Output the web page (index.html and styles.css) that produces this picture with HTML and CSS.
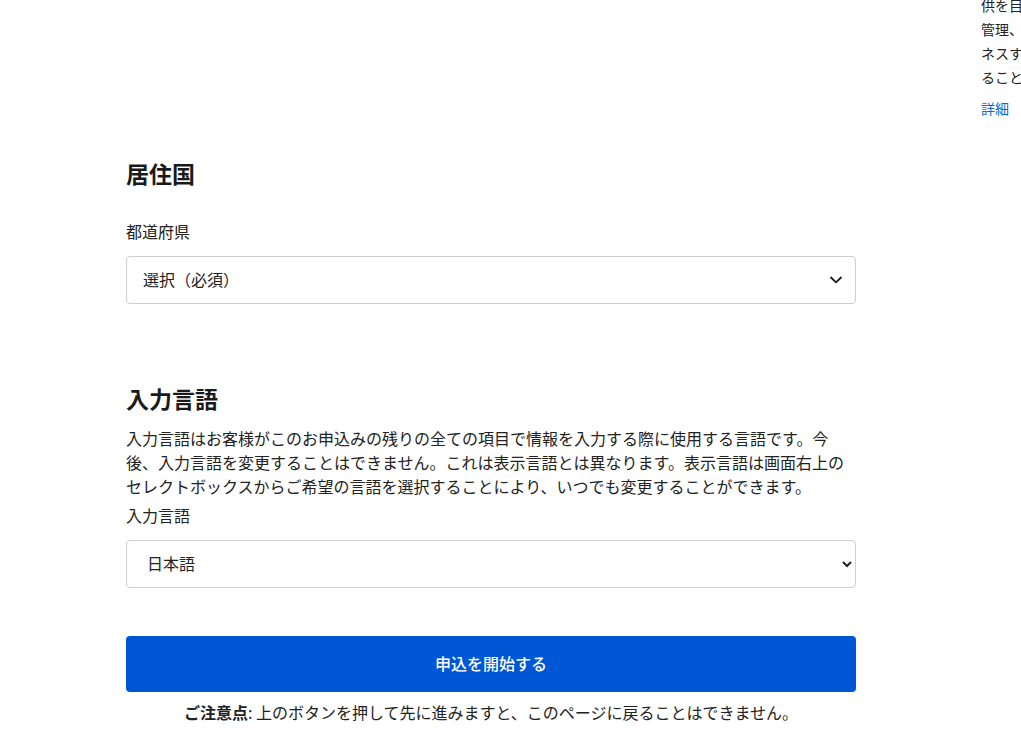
FILE: index.html
```html
<!DOCTYPE html>
<html lang="ja">

<head>
    <meta charset="UTF-8">
    <meta name="viewport" content="width=device-width, initial-scale=1.0">
    <title>申込</title>
    <link rel="stylesheet" href="styles.css">
</head>

<body>
    <div class="page">
        <main class="main">
            <section class="section">
                <h2 class="title">居住国</h2>
                <label class="label" for="pref">都道府県</label>
                <div class="select-wrap">
                    <select class="select select-custom" id="pref">
                        <option>選択（必須）</option>
                    </select>
                    <svg class="chevron" width="14" height="8" viewBox="0 0 14 8">
                        <path d="M2 1.5 L7 6.3 L12 1.5" fill="none" stroke="#1a1a1a" stroke-width="1.8" stroke-linecap="round" stroke-linejoin="round" />
                    </svg>
                </div>
            </section>

            <section class="section section-lang">
                <h2 class="title">入力言語</h2>
                <p class="desc">入力言語はお客様がこのお申込みの残りの全ての項目で情報を入力する際に使用する言語です。今後、入力言語を変更することはできません。これは表示言語とは異なります。表示言語は画面右上のセレクトボックスからご希望の言語を選択することにより、いつでも変更することができます。</p>
                <label class="label" for="lang">入力言語</label>
                <select class="select" id="lang">
                    <option>日本語</option>
                </select>
            </section>

            <button class="start-btn" type="button">申込を開始する</button>
            <p class="note"><strong>ご注意点</strong>: 上のボタンを押して先に進みますと、このページに戻ることはできません。</p>
        </main>

        <aside class="side">
            <p class="side-text">
                <span>供を目的とした</span>
                <span>管理、運営</span>
                <span>ネスすべて</span>
                <span>ることがあります</span>
            </p>
            <a class="side-link" href="#">詳細</a>
        </aside>
    </div>
</body>

</html>
```

FILE: styles.css
```css
html,
body {
    margin: 0;
    padding: 0;
    overflow: hidden;
}

body {
    font-family: "Noto Sans CJK JP", "Noto Sans", sans-serif;
    color: #222222;
    background-color: #fff;
}

.page {
    display: flex;
    width: 1400px;
}

.main {
    flex-shrink: 0;
    width: 730px;
    margin-left: 126px;
    padding-top: 157px;
}

.section {
    display: flex;
    flex-direction: column;
}

.section-lang {
    margin-top: 78px;
}

.title {
    margin: 0 0 30px;
    font-size: 23px;
    line-height: 32px;
    font-weight: 700;
    color: #1a1a1a;
}

.section-lang .title {
    margin-bottom: 12px;
}

.desc {
    margin: 0 0 5px;
    font-size: 16px;
    line-height: 24px;
}

.label {
    font-size: 16px;
    line-height: 24px;
    margin-bottom: 13px;
}

.select-wrap {
    position: relative;
}

.select {
    box-sizing: border-box;
    width: 100%;
    height: 48px;
    padding: 0 16px 2px;
    font-family: inherit;
    font-size: 16px;
    color: #222222;
    background-color: #fff;
    border: 1px solid #cfcfcf;
    border-radius: 4px;
}

.select-custom {
    appearance: none;
    -webkit-appearance: none;
}

.chevron {
    position: absolute;
    right: 13px;
    top: 20px;
    pointer-events: none;
}

.start-btn {
    display: block;
    width: 100%;
    height: 56px;
    margin-top: 48px;
    padding: 0 0 3px;
    border: none;
    border-radius: 4px;
    background-color: #0057d6;
    color: #fff;
    font-family: inherit;
    font-size: 16px;
    font-weight: 500;
    cursor: pointer;
}

.note {
    margin: 8px 0 0;
    text-align: center;
    font-size: 16px;
    line-height: 24px;
}

.note strong {
    font-weight: 700;
}

.side {
    flex-shrink: 0;
    width: 220px;
    margin-left: 125px;
    margin-top: -7px;
}

.side-text {
    margin: 0;
    font-size: 14px;
    line-height: 24px;
}

.side-text span {
    display: block;
    white-space: nowrap;
}

.side-link {
    display: block;
    margin-top: 7px;
    font-size: 14px;
    line-height: 24px;
    color: #0b6bd6;
    text-decoration: none;
}
```
